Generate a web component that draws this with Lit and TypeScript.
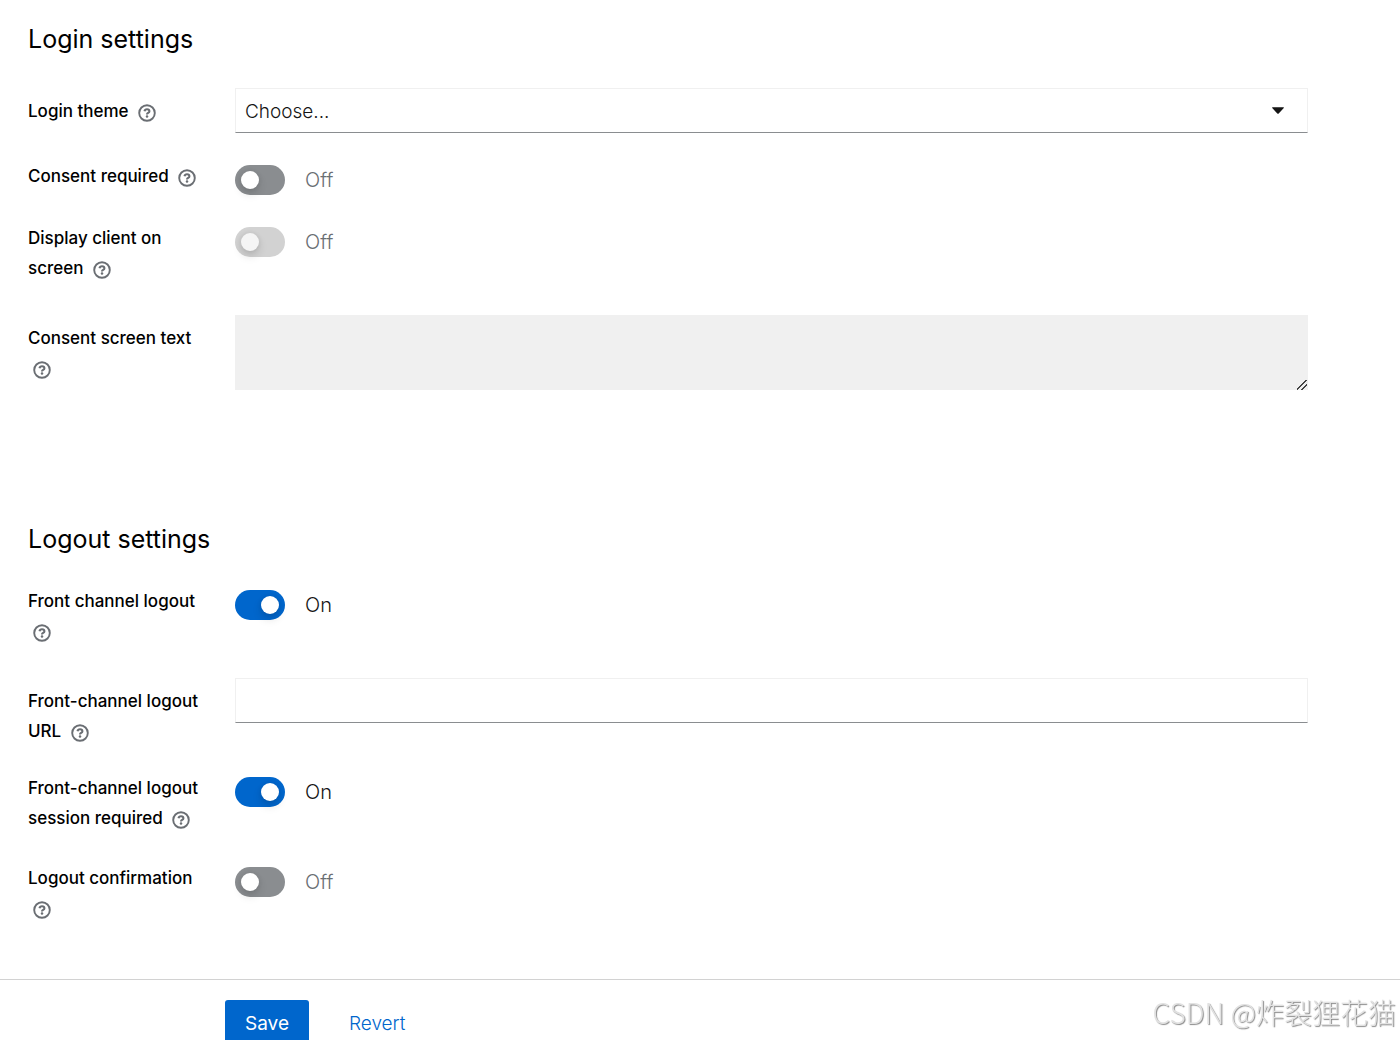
import { LitElement, html, css } from "lit";
import { customElement, property } from "lit/decorators.js";

const helpIcon = html`<svg class="icon" viewBox="0 0 18 18" aria-hidden="true">
  <circle cx="9" cy="9" r="7.8" fill="none" stroke="#6a6e73" stroke-width="1.9" />
  <path d="M6.5 7.3C6.8 5.9 7.7 5.3 9 5.3c1.4 0 2.4.8 2.4 1.9 0 1.8-2.4 1.6-2.4 3.2" fill="none" stroke="#6a6e73" stroke-width="2.1" />
  <circle cx="9" cy="12.6" r="1.25" fill="#6a6e73" />
</svg>`;

@customElement("setting-row")
class SettingRow extends LitElement {
  @property() kind: "switch" | "select" | "text" | "area" = "switch";
  @property() label = "";
  @property({ type: Boolean }) on = false;
  @property({ type: Boolean }) disabled = false;

  static styles = css`
    :host {
      display: grid;
      grid-template-columns: 187px minmax(0, 1fr);
      column-gap: 20px;
      align-items: start;
    }
    .name {
      font: 500 17px/30px Inter, "Open Sans", sans-serif;
      color: #000;
    }
    .name.switch {
      margin-top: -2px;
      padding-bottom: 2px;
    }
    .name.field {
      padding-top: 8px;
      margin-bottom: -1px;
    }
    .help {
      display: inline-flex;
      vertical-align: -5px;
      margin: 0;
      padding: 0 5px;
      border: 0;
      background: none;
      cursor: pointer;
    }
    .icon {
      width: 18px;
      height: 18px;
    }
    .toggle {
      display: flex;
      align-items: center;
      gap: 20px;
      padding-top: 2px;
      font: 300 20px/30px Inter, "Open Sans", sans-serif;
      color: #6a6e73;
    }
    .toggle.on {
      color: #151515;
    }
    .track {
      appearance: none;
      display: flex;
      align-items: center;
      width: 50px;
      height: 30px;
      margin: 0;
      padding: 0 6px;
      box-sizing: border-box;
      border-radius: 15px;
      background: #8a8d90;
    }
    .track::before {
      content: "";
      width: 18px;
      height: 18px;
      border-radius: 50%;
      background: #fff;
      box-shadow: 0 5px 10px rgba(3, 3, 3, 0.14), 0 0 5px rgba(3, 3, 3, 0.08);
    }
    .track:checked {
      justify-content: flex-end;
      background: #06c;
    }
    .track:disabled {
      background: #d2d2d2;
    }
    .track:disabled::before {
      background: #f5f5f5;
    }
    .control {
      display: block;
      box-sizing: border-box;
      width: 100%;
      height: 45px;
      margin: 0;
      padding: 0 10px;
      border: 1px solid #f0f0f0;
      border-bottom-color: #8a8d90;
      border-radius: 0;
      background: #fff;
      color: #151515;
      font: 300 19px/30px Inter, "Open Sans", sans-serif;
      appearance: none;
    }
    .picker {
      display: grid;
      align-items: center;
    }
    .picker > * {
      grid-area: 1 / 1;
    }
    select.control {
      padding: 2px 9px 0;
    }
    .caret {
      justify-self: end;
      width: 12px;
      height: 7px;
      margin-right: 24px;
      pointer-events: none;
    }
    textarea.control {
      height: 75px;
      border: 0;
      background: #f0f0f0;
      resize: vertical;
    }
    textarea.control::-webkit-resizer {
      background: linear-gradient(135deg, transparent 44%, #444 45%, #444 54%, transparent 55%, transparent 68%, #444 69%, #444 78%, transparent 79%)
        4px 5px / 10px 10px no-repeat;
    }
  `;

  private field() {
    switch (this.kind) {
      case "select":
        return html`<div class="picker">
          <select id="field" class="control"><option>Choose...</option></select>
          <svg class="caret" viewBox="0 0 12 7" aria-hidden="true">
            <path d="M.6.3h10.8c.5 0 .7.5.4.8L6.7 6.5c-.4.4-1 .4-1.4 0L.2 1.1C-.1.8.1.3.6.3z" fill="#151515" />
          </svg>
        </div>`;
      case "text":
        return html`<input id="field" class="control" type="text" />`;
      case "area":
        return html`<textarea id="field" class="control" ?disabled=${this.disabled}></textarea>`;
      default:
        return html`<div class="toggle ${this.on ? "on" : ""}">
          <input id="field" class="track" type="checkbox" role="switch"
            .checked=${this.on} ?disabled=${this.disabled}
            @change=${(e: Event) => (this.on = (e.target as HTMLInputElement).checked)} />
          <span>${this.on ? "On" : "Off"}</span>
        </div>`;
    }
  }

  render() {
    return html`<div class="name ${this.kind === "switch" ? "switch" : "field"}">
        <label for="field">${this.label}</label>
        <button class="help" type="button" aria-label="Help">${helpIcon}</button>
      </div>
      ${this.field()}`;
  }
}

@customElement("app-root")
class AppRoot extends LitElement {
  static styles = css`
    :host {
      display: block;
      background: #fff;
    }
    .section {
      padding: 0 92px 0 28px;
    }
    .login {
      padding-top: 23px;
      padding-bottom: 133px;
    }
    .logout {
      padding-bottom: 54px;
    }
    .title {
      margin: 0 0 33px;
      font: 400 25px/32px Inter, "Open Sans", sans-serif;
      color: #000;
    }
    .rows {
      display: grid;
      gap: 30px;
    }
    .actions {
      display: flex;
      gap: 20px;
      padding: 20px 28px 0 225px;
      border-top: 1px solid #d2d2d2;
    }
    .button {
      height: 46px;
      padding: 1px 20px 0;
      border: 0;
      border-radius: 3px;
      background: none;
      color: #06c;
      font: 400 19px/30px Inter, "Open Sans", sans-serif;
      cursor: pointer;
    }
    .primary {
      background: #06c;
      color: #fff;
    }
    .link {
      font-weight: 300;
    }
    .mark {
      position: fixed;
      right: 4px;
      bottom: 8px;
      font: 300 28px/40px "Noto Sans CJK SC", sans-serif;
      color: #e2e2e2;
      text-shadow: 1px 1px 1px #888;
      pointer-events: none;
    }
  `;

  render() {
    return html`<form @submit=${(e: Event) => e.preventDefault()}>
      <section class="section login">
        <h2 class="title">Login settings</h2>
        <div class="rows">
          <setting-row kind="select" label="Login theme"></setting-row>
          <setting-row label="Consent required"></setting-row>
          <setting-row label="Display client on screen" disabled></setting-row>
          <setting-row kind="area" label="Consent screen text" disabled></setting-row>
        </div>
      </section>
      <section class="section logout">
        <h2 class="title">Logout settings</h2>
        <div class="rows">
          <setting-row label="Front channel logout" on></setting-row>
          <setting-row kind="text" label="Front-channel logout URL"></setting-row>
          <setting-row label="Front-channel logout session required" on></setting-row>
          <setting-row label="Logout confirmation"></setting-row>
        </div>
      </section>
      <footer class="actions">
        <button class="button primary" type="submit">Save</button>
        <button class="button link" type="reset">Revert</button>
      </footer>
      <div class="mark">CSDN @炸裂狸花猫</div>
    </form>`;
  }
}
